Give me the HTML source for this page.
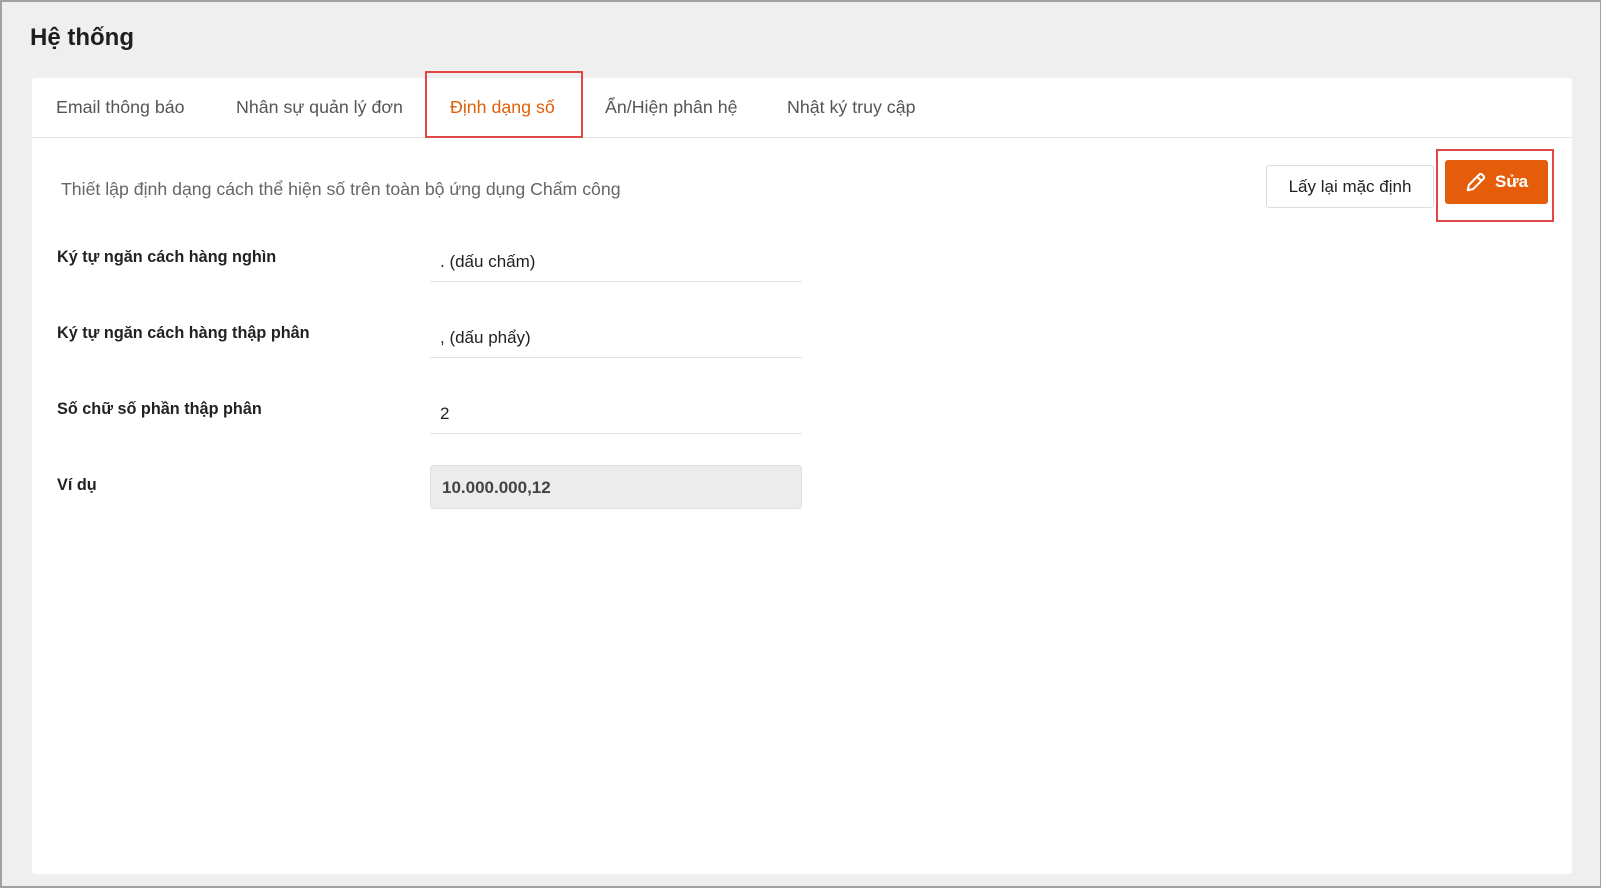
<!DOCTYPE html>
<html><head><meta charset="utf-8"><style>
*{box-sizing:border-box;margin:0;padding:0}
body{width:1601px;height:888px;background:#efefef;font-family:"Liberation Sans",sans-serif;position:relative;overflow:hidden;border:2px solid #a0a0a0;border-right-width:1px;}
.abs{position:absolute}
h1{position:absolute;left:28px;top:22px;font-size:24px;font-weight:bold;color:#1e1e1e}
.panel{position:absolute;left:30px;top:76px;width:1540px;height:796px;background:#fff;border-radius:3px}
.tabs{position:absolute;left:0;top:0;right:0;height:60px;border-bottom:1px solid #e6e6e6}
.tab{position:absolute;top:19px;font-size:17.8px;color:#555}
.red{position:absolute;border:2px solid #e04848}
.lbl{position:absolute;left:25px;font-size:17px;font-weight:bold;color:#222;transform:scaleX(0.955);transform-origin:left top;white-space:nowrap}
.inp{position:absolute;left:398px;width:372px;height:42px;border-bottom:1px solid #e3e3e3;font-size:17px;color:#222;padding:12px 0 0 10px}
</style></head><body>
<h1>Hệ thống</h1>
<div class="panel">
 <div class="tabs">
  <div class="tab" style="left:24px">Email thông báo</div>
  <div class="tab" style="left:204px">Nhân sự quản lý đơn</div>
  <div class="tab" style="left:418px;color:#e0600a">Định dạng số</div>
  <div class="tab" style="left:573px">Ẩn/Hiện phân hệ</div>
  <div class="tab" style="left:755px">Nhật ký truy cập</div>
 </div>
 <div class="red" style="left:393px;top:-7px;width:158px;height:67px"></div>
 <div class="abs" style="left:29px;top:101px;font-size:17.7px;color:#666">Thiết lập định dạng cách thể hiện số trên toàn bộ ứng dụng Chấm công</div>
 <div class="abs" style="left:1234px;top:87px;width:168px;height:43px;border:1px solid #dcdcdc;border-radius:3px;font-size:17px;color:#222;text-align:center;line-height:41px">Lấy lại mặc định</div>
 <div class="red" style="left:1404px;top:71px;width:118px;height:73px"></div>
 <div class="abs" style="left:1413px;top:82px;width:103px;height:44px;background:#e55c0a;border-radius:3px;color:#fff;font-size:17px;font-weight:bold;line-height:44px;padding-left:50px">Sửa
  <svg class="abs" style="left:20px;top:11px" width="22" height="22" viewBox="0 0 20 20" fill="none" stroke="#fff" stroke-width="1.9" stroke-linejoin="round" stroke-linecap="round"><path d="M2.5 17.5l1-4.8L13 3.2a1.8 1.8 0 0 1 2.5 0l1.3 1.3a1.8 1.8 0 0 1 0 2.5L7.3 16.5z M11 5.2l3.8 3.8"/></svg>
 </div>
 <div class="lbl" style="top:169px">Ký tự ngăn cách hàng nghìn</div>
 <div class="inp" style="top:162px">. (dấu chấm)</div>
 <div class="lbl" style="top:245px">Ký tự ngăn cách hàng thập phân</div>
 <div class="inp" style="top:238px">, (dấu phẩy)</div>
 <div class="lbl" style="top:321px">Số chữ số phần thập phân</div>
 <div class="inp" style="top:314px">2</div>
 <div class="lbl" style="top:397px">Ví dụ</div>
 <div class="abs" style="left:398px;top:387px;width:372px;height:44px;background:#ececec;border:1px solid #e0e0e0;border-radius:3px;font-size:17px;font-weight:bold;color:#444;padding:12px 0 0 11px">10.000.000,12</div>
</div>
</body></html>
